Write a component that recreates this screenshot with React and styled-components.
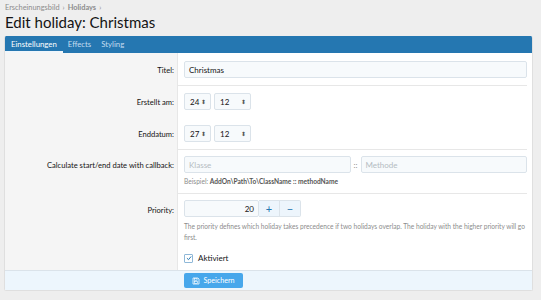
import React from 'react';
import styled, { createGlobalStyle } from 'styled-components';

const GlobalStyle = createGlobalStyle`
  html, body {
    margin: 0;
    padding: 0;
    background: #eeeeee;
    font-family: Lato, "Noto Sans", sans-serif;
    color: #141414;
  }
`;

const Page = styled.div`
  padding: 0 8px 10px 4px;
`;

const Crumbs = styled.div`
  display: flex;
  gap: 3px;
  font-size: 7.4px;
  color: #8c8c8c;
  height: 12px;
  align-items: center;
  padding: 1px 0 0 1px;

  b {
    font-weight: 700;
  }
`;

const Title = styled.h1`
  margin: 0 0 4px 1px;
  font-size: 15px;
  font-weight: 400;
  color: #141414;
  line-height: 19px;
`;

const Block = styled.div`
  border: 1px solid #dfdfdf;
  border-top: none;
  border-radius: 2px;
  background: #fff;
  overflow: hidden;
`;

const Tabs = styled.div`
  display: flex;
  background: #2577b1;
  height: 17px;
`;

const Tab = styled.div`
  font-size: 7.8px;
  padding: 0 ${p => (p.$active ? '6px' : '5px')};
  display: flex;
  align-items: center;
  color: ${p => (p.$active ? '#ffffff' : '#c4ddf0')};
  border-bottom: 2px solid ${p => (p.$active ? '#f0f6fb' : 'transparent')};
  box-sizing: border-box;
`;

const Form = styled.div`
  display: grid;
  grid-template-columns: 173px 1fr;
`;

const Row = styled.div`
  display: contents;
`;

const Label = styled.div`
  background: #f5f5f5;
  text-align: right;
  font-size: 7.6px;
  line-height: 12px;
  color: #141414;
  padding: ${p => p.$top || '10px'} 3px 0 0;
  border-right: 1px solid #e7e7e7;
`;

const Field = styled.div`
  padding: ${p => p.$pad || '7px 0 7px 6px'};
  border-bottom: ${p => (p.$sep ? '1px solid #e7e7e7' : 'none')};
  margin-right: 5px;
`;

const TextInput = styled.div`
  box-sizing: border-box;
  height: 17px;
  border: 1px solid #dbe3ea;
  border-radius: 2px;
  background: #f7fafc;
  font-size: 8px;
  display: flex;
  align-items: center;
  padding: 0 4px;
  color: ${p => (p.$placeholder ? '#b5bcc2' : '#141414')};
  flex: ${p => (p.$grow ? 1 : 'none')};
  justify-content: ${p => (p.$right ? 'flex-end' : 'flex-start')};
  width: ${p => p.$w || 'auto'};
`;

const Inline = styled.div`
  display: flex;
  align-items: center;
  gap: ${p => p.$gap || '3px'};
`;

const Select = styled.div`
  box-sizing: border-box;
  height: 17px;
  width: ${p => p.$w};
  border: 1px solid #dbe3ea;
  border-radius: 2px;
  background: #f7fafc;
  font-size: 8px;
  display: flex;
  align-items: center;
  justify-content: space-between;
  padding: 0 4px 0 5px;
`;

const Arrows = styled.span`
  font-size: 6px;
  color: #555;
  line-height: 1;
`;

const Sep = styled.span`
  font-size: 8px;
  color: #8c8c8c;
  padding: 0 3px;
`;

const Hint = styled.div`
  margin-top: ${p => p.$mt || '4px'};
  font-size: 6.6px;
  line-height: 11px;
  color: #8c8c8c;

  b {
    color: #555;
  }
`;

const StepButton = styled.div`
  box-sizing: border-box;
  height: 17px;
  width: 21px;
  background: #edf5fc;
  border: 1px solid #dbe3ea;
  border-left: none;
  color: #2577b1;
  display: flex;
  align-items: center;
  justify-content: center;
  font-size: 11px;
  border-radius: ${p => (p.$last ? '0 2px 2px 0' : '0')};
`;

const Check = styled.label`
  display: flex;
  align-items: center;
  gap: 5px;
  font-size: 8px;
`;

const Box = styled.span`
  width: 7px;
  height: 7px;
  border: 1px solid #8fb8d8;
  border-radius: 1px;
  display: flex;
  align-items: center;
  justify-content: center;
`;

const Footer = styled.div`
  background: #edf6fd;
  border-top: 1px solid #dbe3ea;
  padding: 2px 0 2px 179px;
`;

const SaveButton = styled.div`
  width: 59px;
  height: 15px;
  background: #47a7eb;
  border-radius: 2px;
  color: #fff;
  font-size: 7.2px;
  display: flex;
  align-items: center;
  justify-content: center;
  gap: 3px;
`;

const Spacer = styled.div`
  background: #f5f5f5;
  border-right: 1px solid #e7e7e7;
`;

export default function App() {
  return (
    <>
      <GlobalStyle />
      <Page>
        <Crumbs>
          <span>Erscheinungsbild</span>
          <span>›</span>
          <b>Holidays</b>
          <span>›</span>
        </Crumbs>
        <Title>Edit holiday: Christmas</Title>
        <Block>
          <Tabs>
            <Tab $active>Einstellungen</Tab>
            <Tab>Effects</Tab>
            <Tab>Styling</Tab>
          </Tabs>
          <Form>
            <Row>
              <Label $top="11px">Titel:</Label>
              <Field $sep $pad="8px 0 7px 6px">
                <TextInput>Christmas</TextInput>
              </Field>
            </Row>
            <Row>
              <Label $top="10px">Erstellt am:</Label>
              <Field $pad="7px 0 7px 6px">
                <Inline>
                  <Select $w="27px">24 <Arrows>⬍</Arrows></Select>
                  <Select $w="37px">12 <Arrows>⬍</Arrows></Select>
                </Inline>
              </Field>
            </Row>
            <Row>
              <Label $top="11px">Enddatum:</Label>
              <Field $sep $pad="8px 0 7px 6px">
                <Inline>
                  <Select $w="27px">27 <Arrows>⬍</Arrows></Select>
                  <Select $w="37px">12 <Arrows>⬍</Arrows></Select>
                </Inline>
              </Field>
            </Row>
            <Row>
              <Label $top="9px">Calculate start/end date with callback:</Label>
              <Field $sep $pad="6px 0 6px 6px">
                <Inline $gap="0">
                  <TextInput $grow $placeholder>Klasse</TextInput>
                  <Sep>::</Sep>
                  <TextInput $grow $placeholder>Methode</TextInput>
                </Inline>
                <Hint $mt="3px">
                  Beispiel: <b>AddOn\Path\To\ClassName :: methodName</b>
                </Hint>
              </Field>
            </Row>
            <Row>
              <Label $top="10px">Priority:</Label>
              <Field $pad="6px 0 0 6px">
                <Inline $gap="0">
                  <TextInput $w="75px" $right>20</TextInput>
                  <StepButton>+</StepButton>
                  <StepButton $last>−</StepButton>
                </Inline>
                <Hint>
                  The priority defines which holiday takes precedence if two holidays overlap. The holiday with the higher priority will go first.
                </Hint>
              </Field>
            </Row>
            <Row>
              <Spacer />
              <Field $pad="10px 0 7px 6px">
                <Check>
                  <Box>
                    <svg width="6" height="6" viewBox="0 0 10 10">
                      <path d="M1.5 5.2 L4.2 7.8 L8.6 2.4" fill="none" stroke="#2577b1" strokeWidth="1.6" />
                    </svg>
                  </Box>
                  Aktiviert
                </Check>
              </Field>
            </Row>
          </Form>
          <Footer>
            <SaveButton>
              <svg width="8" height="8" viewBox="0 0 16 16">
                <path d="M2 2h10l2 2v10H2z" fill="none" stroke="#fff" strokeWidth="1.5" />
                <rect x="5" y="2.5" width="5" height="4" fill="none" stroke="#fff" strokeWidth="1.2" />
                <rect x="5" y="9" width="6" height="4" fill="none" stroke="#fff" strokeWidth="1.2" />
              </svg>
              Speichern
            </SaveButton>
          </Footer>
        </Block>
      </Page>
    </>
  );
}
